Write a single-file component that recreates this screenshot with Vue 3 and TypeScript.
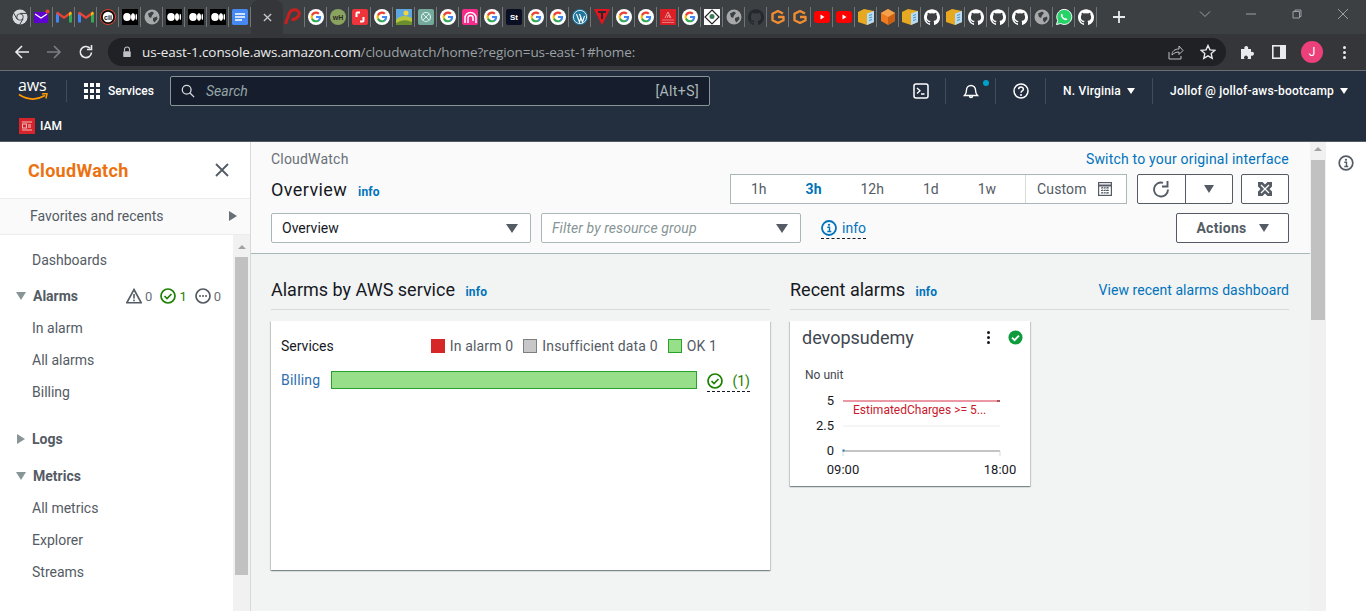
<script setup lang="ts">
type Fav = 'chrome' | 'mail' | 'gmail' | 'cii' | 'medium' | 'globe' | 'docs' | 'active' | 'pin' | 'g' | 'wh' | 'shop' | 'land' | 'gpt' | 'pink' | 'st' | 'wp' | 'tee' | 'redbox' | 'hex' | 'ghdark' | 'og' | 'yt' | 'box' | 'cube' | 'gh' | 'wa'

const tabs: Fav[] = [
  'chrome', 'mail', 'gmail', 'gmail', 'cii', 'medium', 'globe', 'medium', 'medium', 'medium', 'docs', 'active',
  'pin', 'g', 'wh', 'shop', 'g', 'land', 'gpt', 'g', 'pink', 'g', 'st', 'g', 'g', 'wp', 'tee', 'g', 'g', 'redbox', 'g', 'hex',
  'globe', 'ghdark', 'og', 'og', 'yt', 'yt', 'box', 'cube', 'box', 'gh', 'box', 'gh', 'gh', 'gh', 'globe', 'wa', 'gh'
]

const ghPath = 'M12 .5C5.37.5 0 5.87 0 12.5c0 5.3 3.44 9.8 8.2 11.39.6.11.82-.26.82-.58v-2.03c-3.34.73-4.04-1.61-4.04-1.61-.55-1.39-1.33-1.76-1.33-1.76-1.09-.74.08-.73.08-.73 1.2.08 1.84 1.24 1.84 1.24 1.07 1.83 2.81 1.3 3.49 1 .11-.78.42-1.3.76-1.6-2.67-.3-5.47-1.33-5.47-5.93 0-1.31.47-2.38 1.24-3.22-.13-.3-.54-1.52.12-3.18 0 0 1.01-.32 3.3 1.23a11.5 11.5 0 016 0c2.29-1.55 3.3-1.23 3.3-1.23.66 1.66.25 2.88.12 3.18.77.84 1.24 1.91 1.24 3.22 0 4.61-2.81 5.63-5.48 5.92.43.37.81 1.1.81 2.22v3.29c0 .32.22.7.83.58A12 12 0 0024 12.5C24 5.87 18.63.5 12 .5z'

const ranges = [
  { label: '1h', active: false },
  { label: '3h', active: true },
  { label: '12h', active: false },
  { label: '1d', active: false },
  { label: '1w', active: false }
]

const alarmLinks = ['In alarm', 'All alarms', 'Billing']
const metricLinks = ['All metrics', 'Explorer', 'Streams']
</script>

<template>
  <div class="page">
    <!-- browser tab strip -->
    <div class="tabstrip">
      <div
        v-for="(tab, i) in tabs"
        :key="i"
        :class="tab === 'active' ? 'tab-active' : 'tab'"
      >
        <svg v-if="tab === 'active'" class="tab-close" viewBox="0 0 10 10"><path d="M1 1l8 8M9 1L1 9" stroke="#c4c7c9" stroke-width="1.500" /></svg>
        <svg v-else class="fav" viewBox="0 0 16 16">
          <template v-if="tab === 'chrome'">
            <circle cx="8" cy="8" r="7.5" fill="#dadce0" />
            <circle cx="8" cy="8" r="3.6" fill="#3c4043" />
            <circle cx="8" cy="8" r="2.7" fill="#dadce0" />
            <path d="M8 4.4h7M5 10l-3.4-6M11 10l-3.6 6" stroke="#3c4043" stroke-width="1" />
          </template>
          <template v-else-if="tab === 'mail'">
            <rect y="3" width="14" height="11" fill="#5f01d1" />
            <path d="M1 5l6 4 6-4" stroke="#fff" stroke-width="1.2" fill="none" />
            <circle cx="13.5" cy="2.5" r="2" fill="#ea4335" />
          </template>
          <template v-else-if="tab === 'gmail'">
            <path d="M0 13.5V4l2-1 1 1v9.5z" fill="#4285f4" />
            <path d="M13 13.5V4l1-1 2 1v9.5z" fill="#34a853" />
            <path d="M0 4.5l1.5-2L8 7.2l6.500-4.700 1.500 2L8 10z" fill="#ea4335" />
            <path d="M13 4l1.500-1.500L16 4.500 13 7z" fill="#fbbc04" />
          </template>
          <template v-else-if="tab === 'cii'">
            <circle cx="8" cy="8" r="7.500" fill="#111" stroke="#e8432e" stroke-width="1" />
            <circle cx="8" cy="8" r="5.200" fill="#fff" />
            <text x="8" y="10.500" class="fav-text" font-size="7" fill="#111">cii</text>
          </template>
          <template v-else-if="tab === 'medium'">
            <rect width="16" height="16" fill="#000" />
            <ellipse cx="5" cy="8" rx="3.800" ry="4" fill="#fff" />
            <ellipse cx="11" cy="8" rx="2" ry="3.700" fill="#fff" />
            <ellipse cx="14.300" cy="8" rx=".8" ry="3.300" fill="#fff" />
          </template>
          <template v-else-if="tab === 'globe'">
            <circle cx="8" cy="8" r="7.500" fill="#a6a8aa" />
            <path d="M4 4.500l4-2 2 1.500-2 2.500-1 2.500-2-1zM9 9l4-1.500.5 2.500-3 3.500-1.500-2z" fill="#3c4043" />
          </template>
          <template v-else-if="tab === 'docs'">
            <rect x="0" y="0" width="16" height="16" rx="1.500" fill="#4688f1" />
            <path d="M3 5h10M3 8h10M3 11h7" stroke="#fff" stroke-width="1.500" />
          </template>
          <template v-else-if="tab === 'pin'">
            <path d="M-.500 15L3.500 3.500Q6 0 10.500 1 14.500 3 12.500 7q-3 4-7 3.500" fill="none" stroke="#c9201f" stroke-width="3" />
          </template>
          <template v-else-if="tab === 'g'">
            <circle cx="8" cy="8" r="8" fill="#fff" />
            <g transform="translate(2.100 2.100) scale(.49)">
              <path d="M22.560 12.250c0-.78-.07-1.530-.2-2.250H12v4.260h5.920c-.26 1.370-1.040 2.530-2.210 3.310v2.770h3.570c2.080-1.920 3.280-4.740 3.280-8.090z" fill="#4285f4" />
              <path d="M12 23c2.970 0 5.460-.98 7.280-2.660l-3.570-2.770c-.98.66-2.230 1.060-3.710 1.060-2.860 0-5.290-1.930-6.160-4.530H2.180v2.840C3.990 20.530 7.700 23 12 23z" fill="#34a853" />
              <path d="M5.840 14.090c-.22-.66-.35-1.360-.35-2.090s.13-1.430.35-2.090V7.070H2.180C1.430 8.550 1 10.220 1 12s.43 3.450 1.180 4.930l3.660-2.840z" fill="#fbbc05" />
              <path d="M12 5.380c1.620 0 3.060.56 4.210 1.640l3.150-3.150C17.450 2.090 14.970 1 12 1 7.700 1 3.990 3.470 2.180 7.070l3.660 2.840c.87-2.600 3.300-4.530 6.160-4.530z" fill="#ea4335" />
            </g>
          </template>
          <template v-else-if="tab === 'wh'">
            <circle cx="8" cy="8" r="8" fill="#8aa35e" />
            <text x="8" y="10.500" class="fav-text" font-size="7" fill="#2a2a2a">wH</text>
          </template>
          <template v-else-if="tab === 'shop'">
            <rect width="16" height="16" rx="2" fill="#f0343c" />
            <path d="M8 3.500H5.500a1 1 0 0 0-1 1V8M8 12.500h2.500a1 1 0 0 0 1-1V8" stroke="#fff" stroke-width="2" fill="none" />
          </template>
          <template v-else-if="tab === 'land'">
            <rect width="16" height="16" fill="#5da7e0" />
            <circle cx="10" cy="4" r="2.500" fill="#f5d33f" />
            <path d="M0 11Q6 4 16 9v7H0z" fill="#b6c73f" />
            <path d="M0 14Q8 9 16 13v3H0z" fill="#6b8f2d" />
          </template>
          <template v-else-if="tab === 'gpt'">
            <rect width="16" height="16" rx="2" fill="#74aa9c" />
            <circle cx="8" cy="8" r="4.500" fill="none" stroke="#d8efe8" stroke-width="1.200" />
            <path d="M5 5l6 6M11 5l-6 6" stroke="#d8efe8" stroke-width="1" />
          </template>
          <template v-else-if="tab === 'pink'">
            <rect width="16" height="16" rx="2" fill="#f72b8c" />
            <path d="M3 14V9a5.500 5.500 0 0 1 11 0v5M6 14V9a2.500 2.500 0 0 1 5 0v3" fill="none" stroke="#fff" stroke-width="1.500" />
          </template>
          <template v-else-if="tab === 'st'">
            <rect width="16" height="16" rx="2" fill="#0a0f24" />
            <text x="8" y="11" class="fav-text" font-size="8" fill="#fff">St</text>
          </template>
          <template v-else-if="tab === 'wp'">
            <circle cx="8" cy="8" r="8" fill="#21759b" />
            <circle cx="8" cy="8" r="6.600" fill="none" stroke="#fff" stroke-width=".8" />
            <path d="M4.500 5l3 8 1.500-4.500L7.500 5M7.500 5l3 8 2-6" fill="none" stroke="#fff" stroke-width="1.100" />
          </template>
          <template v-else-if="tab === 'tee'">
            <path d="M0 0h16L8 16z" fill="#e3131f" />
            <path d="M4 3h8M8 3v7" stroke="#26282b" stroke-width="2" />
          </template>
          <template v-else-if="tab === 'redbox'">
            <rect width="16" height="16" fill="#da1f26" />
            <path d="M5 9l3-6 3 6M7 9l1.500-3 1.500 3" fill="none" stroke="#f4b6b6" stroke-width=".8" />
            <path d="M2 11h12M2 13.500h12" stroke="#f4b6b6" stroke-width=".6" />
          </template>
          <template v-else-if="tab === 'hex'">
            <rect width="16" height="16" fill="#fff" />
            <path d="M8 1l7 7-7 7-7-7z" fill="none" stroke="#222" stroke-width="1.200" />
            <circle cx="8" cy="7.500" r="2.500" fill="#3d7a55" />
          </template>
          <template v-else-if="tab === 'ghdark'">
            <g transform="scale(.667)"><path :d="ghPath" fill="#24292e" /></g>
          </template>
          <template v-else-if="tab === 'gh'">
            <g transform="scale(.667)"><path :d="ghPath" fill="#fff" /></g>
          </template>
          <template v-else-if="tab === 'og'">
            <path d="M13 4.500L8 2 2.500 4.800v6.400L8 14l5.500-2.800V8H8" fill="none" stroke="#f08d34" stroke-width="2.400" stroke-linejoin="round" />
          </template>
          <template v-else-if="tab === 'yt'">
            <rect y="2" width="16" height="12" rx="3" fill="#f00" />
            <path d="M6.500 5.500l4 2.500-4 2.500z" fill="#fff" />
          </template>
          <template v-else-if="tab === 'box'">
            <path d="M0 3l6-3 10 2v11l-7 3-9-3z" fill="#e8a922" />
            <path d="M9 4.500l7-2.500v11l-7 3z" fill="#b7dcf5" />
            <path d="M11 6.500l3-1M11 9l3-1M11 11.500l3-1" stroke="#4a90c2" stroke-width="1" />
          </template>
          <template v-else-if="tab === 'cube'">
            <path d="M8 0l7 4v8l-7 4-7-4V4z" fill="#ee7b1f" />
            <path d="M8 8l7-4v8l-7 4z" fill="#c95f14" />
            <path d="M8 8L1 4l7-4 7 4z" fill="#f5a04a" />
          </template>
          <template v-else-if="tab === 'wa'">
            <path d="M.5 15.500l1.200-4A7.500 7.500 0 1 1 4.700 14.500z" fill="#25d366" stroke="#fff" stroke-width="1" />
            <path d="M5.500 4.500c-1.500 1.500-.5 3.500 1 5s3.500 2.500 5 1l-1.500-1.500-1 .5c-1-.5-2-1.500-2.500-2.500l.5-1z" fill="#fff" />
          </template>
        </svg>
      </div>
      <svg class="tab-plus" viewBox="0 0 12 12"><path d="M6 0v12M0 6h12" stroke="#e8eaed" stroke-width="1.800" /></svg>
      <div class="win-controls">
        <svg viewBox="0 0 12 12" class="win"><path d="M1 3.500l5 5 5-5" /></svg>
        <svg viewBox="0 0 12 12" class="win"><path d="M1 6h10" /></svg>
        <svg viewBox="0 0 12 12" class="win"><path d="M2 3.500h6.500V10H2zM4 3.500V2h6v6.500H8.500" /></svg>
        <svg viewBox="0 0 12 12" class="win"><path d="M1 1l10 10M11 1L1 11" /></svg>
      </div>
    </div>

    <!-- browser toolbar -->
    <div class="toolbar">
      <svg class="tool-btn" viewBox="0 0 16 16"><path d="M15 8H2M8 2L2 8l6 6" fill="none" stroke="#e8eaed" stroke-width="1.600" /></svg>
      <svg class="tool-btn" viewBox="0 0 16 16"><path d="M1 8h13M8 2l6 6-6 6" fill="none" stroke="#7b7e82" stroke-width="1.600" /></svg>
      <svg class="tool-btn" viewBox="0 0 16 16"><path d="M13.500 8.500A5.600 5.600 0 1 1 12 4.200M13.500 1v4.500H9" fill="none" stroke="#e8eaed" stroke-width="1.600" /></svg>
      <div class="urlbar">
        <svg class="lock" viewBox="0 0 12 14"><path d="M3 6V4a3 3 0 0 1 6 0v2" fill="none" stroke="#bdc1c6" stroke-width="1.300" /><rect x="1.500" y="6" width="9" height="7" rx="1" fill="#bdc1c6" /></svg>
        <span class="url"><span class="url-host">us-east-1.console.aws.amazon.com</span>/cloudwatch/home?region=us-east-1#home:</span>
        <svg class="url-share" viewBox="0 0 16 16"><path d="M1 8v7h12v-3M4 11c0-4 3-6 7-6V2l4 4.500-4 4V8c-3 0-5 1-7 3z" fill="none" stroke="#bdc1c6" stroke-width="1" /></svg>
        <svg class="url-star" viewBox="0 0 16 16"><path d="M8 1.500l2 4.400 4.800.5-3.600 3.200 1 4.700L8 11.900l-4.200 2.400 1-4.700L1.200 6.400 6 5.900z" fill="none" stroke="#e8eaed" stroke-width="1.400" /></svg>
      </div>
      <svg class="ext" viewBox="0 0 16 16"><path d="M1 5h3.500a2 2 0 1 1 3.500 0h3v3a2 2 0 1 1 0 3.500V15H7.500a2 2 0 1 0-3 0H1z" fill="#e8eaed" /></svg>
      <svg class="side-panel" viewBox="0 0 14 14"><rect x=".8" y=".8" width="12.400" height="12.400" fill="none" stroke="#e8eaed" stroke-width="1.600" /><rect x="8" y="1" width="5" height="12" fill="#e8eaed" /></svg>
      <span class="avatar">J</span>
      <span class="kebab"><i></i><i></i><i></i></span>
    </div>

    <!-- aws console nav -->
    <header class="aws-nav">
      <div class="nav-row">
        <div class="aws-logo">
          <span class="aws-word">aws</span>
          <svg viewBox="0 0 32 9" class="aws-smile"><path d="M1 1.500Q14 10 27 2.500" fill="none" stroke="#f90" stroke-width="1.700" /><path d="M24 1l5-.5-1 5" fill="none" stroke="#f90" stroke-width="1.500" /></svg>
        </div>
        <span class="nav-sep"></span>
        <svg class="nav-grid" viewBox="0 0 16 16" fill="#fff">
          <rect width="4" height="4" /><rect x="6" width="4" height="4" /><rect x="12" width="4" height="4" />
          <rect y="6" width="4" height="4" /><rect x="6" y="6" width="4" height="4" /><rect x="12" y="6" width="4" height="4" />
          <rect y="12" width="4" height="4" /><rect x="6" y="12" width="4" height="4" /><rect x="12" y="12" width="4" height="4" />
        </svg>
        <span class="services">Services</span>
        <div class="search">
          <svg viewBox="0 0 16 16" class="search-icon"><circle cx="6.500" cy="6.500" r="5" fill="none" stroke="#d5dbdb" stroke-width="1.500" /><path d="M10 10l5 5" stroke="#d5dbdb" stroke-width="1.500" /></svg>
          <span class="search-text">Search</span>
          <span class="search-key">[Alt+S]</span>
        </div>
        <div class="nav-right">
          <span class="nav-item nav-ico">
            <svg viewBox="0 0 16 16" class="nav-icon"><rect x="1" y="1" width="14" height="14" rx="2" fill="none" stroke="#fff" stroke-width="1.500" /><path d="M4 5l3 2.700L4 10.500M8 11h3.500" fill="none" stroke="#fff" stroke-width="1.300" /></svg>
          </span>
          <span class="nav-item nav-ico bell">
            <svg viewBox="0 0 16 16" class="nav-icon"><path d="M1.500 12.500c1.500-1.500 2-2 2-5.500a4.500 4.500 0 0 1 9 0c0 3.500.5 4 2 5.500zM6.500 13c0 2 3 2 3 0" fill="none" stroke="#fff" stroke-width="1.400" /></svg>
            <span class="bell-dot"></span>
          </span>
          <span class="nav-item nav-ico">
            <svg viewBox="0 0 16 16" class="nav-icon"><circle cx="8" cy="8" r="7" fill="none" stroke="#fff" stroke-width="1.500" /><path d="M5.600 6.200c0-3 4.800-3 4.800 0 0 1.800-2.400 1.600-2.400 3.500" fill="none" stroke="#fff" stroke-width="1.500" /><circle cx="8" cy="12" r="1" fill="#fff" /></svg>
          </span>
          <span class="nav-item nav-text">N. Virginia <i class="caret"></i></span>
          <span class="nav-item nav-text nav-last">Jollof @ jollof-aws-bootcamp <i class="caret"></i></span>
        </div>
      </div>
      <div class="nav-row2">
        <svg viewBox="0 0 16 16" class="iam-icon"><rect width="16" height="16" fill="#d6242d" /><path d="M3 4h10M3 12h10" stroke="#f4bcbc" stroke-width="1" /><rect x="3.500" y="6" width="4" height="4" fill="none" stroke="#f4bcbc" stroke-width="1" /><rect x="9" y="6" width="3" height="4" fill="#e9777c" /></svg>
        <span>IAM</span>
      </div>
    </header>

    <div class="console">
      <!-- left navigation -->
      <aside class="sidebar">
        <div class="side-head">
          <span class="side-title">CloudWatch</span>
          <svg viewBox="0 0 14 14" class="side-close"><path d="M1 1l12 12M13 1L1 13" stroke="#545b64" stroke-width="1.800" /></svg>
        </div>
        <div class="favorites">
          <span>Favorites and recents</span>
          <i class="tri-right"></i>
        </div>
        <div class="side-body">
          <nav class="side-nav">
            <a class="side-link first">Dashboards</a>
            <div class="side-group">
              <i class="tri-down"></i><b>Alarms</b>
              <span class="alarm-counts">
                <svg viewBox="0 0 16 16" class="ci"><path d="M8 1.500L15.200 14.800H.8z" fill="none" stroke="#545b64" stroke-width="1.600" /><path d="M8 6v4.500M8 11.500v1.800" stroke="#545b64" stroke-width="1.600" /></svg>
                <em>0</em>
                <svg viewBox="0 0 16 16" class="ci"><circle cx="8" cy="8" r="7" fill="none" stroke="#1d8102" stroke-width="1.700" /><path d="M4.500 8l2.500 2.500 4.500-4.500" fill="none" stroke="#1d8102" stroke-width="1.700" /></svg>
                <em class="ok">1</em>
                <svg viewBox="0 0 16 16" class="ci"><circle cx="8" cy="8" r="7" fill="none" stroke="#545b64" stroke-width="1.700" /><circle cx="5" cy="8" r="1" fill="#545b64" /><circle cx="8" cy="8" r="1" fill="#545b64" /><circle cx="11" cy="8" r="1" fill="#545b64" /></svg>
                <em>0</em>
              </span>
            </div>
            <a v-for="item in alarmLinks" :key="item" class="side-link">{{ item }}</a>
            <div class="side-group logs"><i class="tri-side"></i><b>Logs</b></div>
            <div class="side-group metrics"><i class="tri-down"></i><b>Metrics</b></div>
            <a v-for="item in metricLinks" :key="item" class="side-link">{{ item }}</a>
          </nav>
          <div class="scrollbar side-scroll">
            <i class="sb-up"></i>
            <div class="sb-thumb side-thumb"></div>
          </div>
        </div>
      </aside>

      <!-- main content -->
      <main class="main">
        <section class="main-head">
          <div class="crumb-row">
            <span class="crumb">CloudWatch</span>
            <a class="link">Switch to your original interface</a>
          </div>
          <div class="title-row">
            <h1>Overview <a class="info">info</a></h1>
            <div class="time-range">
              <div class="range-list">
                <span v-for="r in ranges" :key="r.label" class="range" :class="{ on: r.active }">{{ r.label }}</span>
              </div>
              <span class="range-custom">
                Custom
                <svg viewBox="0 0 14 14" class="cal"><rect x=".6" y=".6" width="12.800" height="12.800" fill="none" stroke="#545b64" stroke-width="1.200" /><path d="M1 3.500h12" stroke="#545b64" stroke-width="2" /><path d="M3 6h8M3 8.500h8M3 11h8M4.300 5v7M7 5v7M9.700 5v7" stroke="#545b64" stroke-width="1.200" stroke-dasharray="1.500 1" /></svg>
              </span>
            </div>
            <div class="btn-pair">
              <button class="btn-seg">
                <svg viewBox="0 0 18 18" class="refresh"><path d="M16 9.500A7 7 0 1 1 11 2.800" fill="none" stroke="#545b64" stroke-width="1.900" /><path d="M15.500 1v5.500H10" fill="none" stroke="#545b64" stroke-width="1.900" /></svg>
              </button>
              <button class="btn-seg"><i class="tri-sm"></i></button>
            </div>
            <button class="btn-full">
              <svg viewBox="0 0 16 16" class="expand"><rect x="1" y="1" width="14" height="14" fill="#545b64" /><path d="M4 4l8 8M12 4l-8 8" stroke="#fff" stroke-width="1.300" /><path d="M5.500 1h5L8 3.500zM5.500 15h5L8 12.500zM1 5.500v5L3.500 8zM15 5.500v5L12.500 8z" fill="#fff" /></svg>
            </button>
          </div>
          <div class="filter-row">
            <div class="select"><span>Overview</span><i class="tri-btn"></i></div>
            <div class="select ghost"><span>Filter by resource group</span><i class="tri-btn"></i></div>
            <div class="info-help">
              <svg viewBox="0 0 16 16" class="info-icon"><circle cx="8" cy="8" r="7" fill="none" stroke="#0073bb" stroke-width="1.800" /><circle cx="8" cy="4.800" r="1.100" fill="#0073bb" /><path d="M6.300 7.300H8.500V11.500M6.300 11.500h4" fill="none" stroke="#0073bb" stroke-width="1.400" /></svg>
              <span>info</span>
            </div>
            <button class="actions">Actions <i class="tri-sm"></i></button>
          </div>
        </section>

        <section class="main-body">
          <div class="col">
            <div class="col-head">
              <h2>Alarms by AWS service <a class="info">info</a></h2>
            </div>
            <div class="card services-card">
              <div class="services-head">
                <span>Services</span>
                <div class="legend">
                  <i class="sw sw-red"></i><span class="lg-in">In alarm 0</span>
                  <i class="sw sw-grey"></i><span class="lg-ins">Insufficient data 0</span>
                  <i class="sw sw-green"></i><span>OK 1</span>
                </div>
              </div>
              <div class="service-row">
                <a class="svc-link">Billing</a>
                <div class="svc-bar"></div>
                <div class="svc-count">
                  <svg viewBox="0 0 16 16" class="ci"><circle cx="8" cy="8" r="7" fill="none" stroke="#1d8102" stroke-width="1.700" /><path d="M4.500 8l2.500 2.500 4.500-4.500" fill="none" stroke="#1d8102" stroke-width="1.700" /></svg>
                  <span>(1)</span>
                </div>
              </div>
            </div>
          </div>
          <div class="col">
            <div class="col-head">
              <h2>Recent alarms <a class="info">info</a></h2>
              <a class="link view-link">View recent alarms dashboard</a>
            </div>
            <div class="card alarm-card">
              <div class="alarm-top">
                <span class="alarm-name">devopsudemy</span>
                <span class="alarm-dots"><i></i><i></i><i></i></span>
                <svg viewBox="0 0 16 16" class="alarm-ok"><circle cx="8" cy="8" r="7.500" fill="#0e9b3c" /><path d="M4.300 8.200l2.700 2.600 4.700-4.800" fill="none" stroke="#fff" stroke-width="2" /></svg>
              </div>
              <div class="alarm-unit">No unit</div>
              <svg class="chart" viewBox="0 0 240 107" width="240" height="107">
                <path d="M53 23h157" stroke="#d6344a" stroke-width="1" />
                <path d="M207 23h3" stroke="#6e1208" stroke-width="1" />
                <path d="M53 48h157" stroke="#eaeded" stroke-width="1" />
                <path d="M53 73h157" stroke="#c4c4c4" stroke-width="2" />
                <path d="M53 73v5M210 73v5" stroke="#d5dbdb" stroke-width="1" />
                <rect x="52.500" y="71.500" width="2" height="2" fill="#1f77b4" />
                <text x="44" y="27" text-anchor="end" class="tick">5</text>
                <text x="44" y="52" text-anchor="end" class="tick">2.5</text>
                <text x="44" y="77" text-anchor="end" class="tick">0</text>
                <text x="53" y="96" text-anchor="middle" class="tick">09:00</text>
                <text x="210" y="96" text-anchor="middle" class="tick">18:00</text>
                <text x="63" y="36" class="thresh">EstimatedCharges &gt;= 5...</text>
              </svg>
            </div>
          </div>
        </section>
      </main>

      <div class="scrollbar main-scroll">
        <i class="sb-up"></i>
        <div class="sb-thumb main-thumb"></div>
      </div>

      <aside class="help-rail">
        <svg viewBox="0 0 16 16" class="rail-icon"><circle cx="8" cy="8" r="6.800" fill="none" stroke="#545b64" stroke-width="1.700" /><circle cx="8" cy="4.800" r="1.100" fill="#545b64" /><path d="M6.300 7.300H8.500V11.500M6.300 11.500h4" fill="none" stroke="#545b64" stroke-width="1.400" /></svg>
      </aside>
    </div>
  </div>
</template>

<style>
html, body {
  margin: 0;
  overflow: hidden;
}
</style>

<style scoped>
.page {
  width: 1366px;
  height: 611px;
  display: flex;
  flex-direction: column;
  overflow: hidden;
  font-family: Roboto, "Liberation Sans", sans-serif;
  font-size: 14px;
  color: #16191f;
}

/* browser chrome */
.tabstrip {
  height: 34px;
  flex: none;
  background: #3c4043;
  display: flex;
  align-items: flex-start;
  padding-left: 9px;
}
.tab {
  width: 22px;
  height: 34px;
  box-sizing: border-box;
  flex: none;
  display: flex;
  align-items: center;
  justify-content: center;
  position: relative;
}
.tab::after {
  content: "";
  position: absolute;
  right: 0;
  top: 7px;
  height: 20px;
  width: 1px;
  background: #70757a;
}
.tab-active {
  width: 32px;
  height: 34px;
  flex: none;
  background: #35363a;
  border-radius: 8px 8px 0 0;
  display: flex;
  align-items: center;
  justify-content: center;
}
.tab-close {
  width: 9px;
  height: 9px;
}
.fav {
  width: 16px;
  height: 16px;
  display: block;
  overflow: visible;
}
.fav-text {
  font-family: "Liberation Sans", sans-serif;
  font-weight: 700;
  text-anchor: middle;
}
.tab-plus {
  margin: 11px 0 0 16px;
  width: 12px;
  height: 12px;
}
.win-controls {
  margin-left: auto;
  width: 184px;
  display: grid;
  grid-template-columns: repeat(4, 46px);
  justify-items: center;
  align-items: center;
  height: 28px;
}
.win {
  width: 12px;
  height: 12px;
  fill: none;
  stroke: #9aa0a6;
  stroke-width: 1;
}

.toolbar {
  height: 36px;
  flex: none;
  background: #35363a;
  display: flex;
  align-items: center;
  padding-left: 14px;
  box-sizing: border-box;
}
.tool-btn {
  width: 16px;
  height: 16px;
  margin-right: 16px;
}
.urlbar {
  margin-left: -2px;
  width: 1118px;
  height: 28px;
  background: #202124;
  border-radius: 14px;
  display: flex;
  align-items: center;
  box-sizing: border-box;
  padding-left: 14px;
}
.lock {
  width: 10px;
  height: 12px;
  margin-right: 10px;
}
.url {
  color: #9aa0a6;
  font-family: "Open Sans", sans-serif;
  font-size: 13.5px;
  flex: 1;
  white-space: nowrap;
  letter-spacing: -0.1px;
}
.url-host {
  color: #e8eaed;
}
.url-share {
  width: 16px;
  height: 16px;
  margin-right: 16px;
}
.url-star {
  width: 16px;
  height: 16px;
  margin-right: 10px;
}
.ext {
  width: 16px;
  height: 16px;
  margin-left: 14px;
}
.side-panel {
  width: 14px;
  height: 14px;
  margin-left: 16px;
}
.avatar {
  width: 22px;
  height: 22px;
  margin-left: 15px;
  border-radius: 50%;
  background: #ec407a;
  color: #fff;
  font-size: 12px;
  display: flex;
  align-items: center;
  justify-content: center;
}
.kebab {
  margin-left: 20px;
  display: flex;
  flex-direction: column;
  gap: 2px;
}
.kebab i {
  width: 3px;
  height: 3px;
  border-radius: 50%;
  background: #e8eaed;
}

/* aws nav */
.aws-nav {
  height: 72px;
  flex: none;
  box-sizing: border-box;
  background: #232f3e;
  border-top: 1px solid #6b6f73;
  border-bottom: 1px solid #545b64;
  color: #fff;
}
.nav-row {
  height: 40px;
  display: flex;
  align-items: center;
  padding-left: 18px;
  box-sizing: border-box;
}
.aws-logo {
  width: 32px;
  height: 24px;
  position: relative;
}
.aws-word {
  display: block;
  font-family: "Open Sans", sans-serif;
  font-size: 16px;
  line-height: 16px;
  letter-spacing: -0.2px;
  margin-top: -2px;
}
.aws-smile {
  display: block;
  width: 32px;
  height: 9px;
  margin-top: 0;
}
.nav-sep {
  width: 1px;
  height: 22px;
  background: #414d5c;
  margin-left: 16px;
}
.nav-grid {
  width: 16px;
  height: 16px;
  margin-left: 17px;
}
.services {
  margin-left: 8px;
  font-size: 12px;
  font-weight: 500;
  width: 46px;
}
.search {
  margin-left: 16px;
  width: 540px;
  height: 30px;
  box-sizing: border-box;
  border: 1px solid #879596;
  border-radius: 2px;
  background: #161e2d;
  display: flex;
  align-items: center;
  padding: 0 10px 0 10px;
}
.search-icon {
  width: 14px;
  height: 14px;
}
.search-text {
  margin-left: 11px;
  font-style: italic;
  color: #95a5a6;
  font-size: 14px;
}
.search-key {
  margin-left: auto;
  color: #aab7b8;
  font-size: 14px;
  letter-spacing: 0.4px;
}
.nav-right {
  margin-left: auto;
  display: flex;
  align-items: center;
  height: 26px;
}
.nav-item {
  height: 26px;
  display: flex;
  align-items: center;
  padding: 0 17px 0 17px;
  border-left: 1px solid #414d5c;
  position: relative;
  box-sizing: border-box;
}
.nav-item:first-child {
  border-left: none;
}
.nav-ico {
  padding: 0 16px 0 17px;
}
.nav-item.nav-ico:first-child {
  padding: 0 16px 0 18px;
}
.nav-icon {
  width: 16px;
  height: 16px;
}
.bell-dot {
  position: absolute;
  top: 2px;
  right: 6px;
  width: 6px;
  height: 6px;
  border-radius: 50%;
  background: #00a1c9;
}
.nav-text {
  font-size: 12px;
  font-weight: 500;
  gap: 6px;
  letter-spacing: 0.2px;
}
.nav-last {
  padding-right: 18px;
}
.caret {
  width: 0;
  height: 0;
  border-left: 4.5px solid transparent;
  border-right: 4.5px solid transparent;
  border-top: 6px solid #fff;
}
.nav-row2 {
  height: 30px;
  display: flex;
  align-items: center;
  gap: 5px;
  padding-left: 19px;
  font-size: 12px;
  font-weight: 500;
}
.iam-icon {
  width: 16px;
  height: 16px;
}

/* console layout */
.console {
  flex: 1;
  display: flex;
  min-height: 0;
}
.sidebar {
  width: 251px;
  flex: none;
  box-sizing: border-box;
  background: #fff;
  border-right: 1px solid #d5dbdb;
  display: flex;
  flex-direction: column;
}
.side-head {
  height: 56px;
  flex: none;
  display: flex;
  align-items: center;
  justify-content: space-between;
  padding: 0 21px 0 28px;
}
.side-title {
  color: #ec7211;
  font-size: 18px;
  font-weight: 700;
  letter-spacing: 0.3px;
}
.side-close {
  width: 14px;
  height: 14px;
}
.favorites {
  height: 37px;
  flex: none;
  box-sizing: border-box;
  background: #fafafa;
  border-top: 1px solid #eaeded;
  border-bottom: 1px solid #eaeded;
  display: flex;
  align-items: center;
  justify-content: space-between;
  padding: 0 13px 2px 30px;
  color: #545b64;
}
.tri-right, .tri-side {
  width: 0;
  height: 0;
  border-top: 5.5px solid transparent;
  border-bottom: 5.5px solid transparent;
  border-left: 8px solid #687078;
}
.tri-side {
  border-left-color: #879596;
}
.side-body {
  flex: 1;
  display: flex;
  min-height: 0;
}
.side-nav {
  flex: 1;
  padding-top: 9px;
  display: flex;
  flex-direction: column;
  color: #545b64;
}
.side-link {
  display: block;
  height: 32px;
  line-height: 32px;
  padding-left: 32px;
}
.side-group {
  height: 32px;
  margin-top: 4px;
  display: flex;
  align-items: center;
  padding-left: 16px;
  gap: 7px;
}
.side-group b {
  font-weight: 700;
  color: #545b64;
}
.logs {
  margin-top: 15px;
  padding-left: 17px;
  gap: 7px;
}
.metrics {
  margin-top: 5px;
}
.tri-down {
  width: 0;
  height: 0;
  border-left: 5.5px solid transparent;
  border-right: 5.5px solid transparent;
  border-top: 8px solid #879596;
}
.alarm-counts {
  margin-left: auto;
  margin-right: 12px;
  display: flex;
  align-items: center;
  gap: 3px;
}
.alarm-counts em {
  font-style: normal;
  color: #687078;
  margin-right: 5px;
  font-size: 13px;
}
.alarm-counts em:last-child {
  margin-right: 0;
}
.alarm-counts em.ok {
  color: #1d8102;
}
.ci {
  width: 16px;
  height: 16px;
  display: block;
}

.scrollbar {
  width: 15px;
  flex: none;
  background: #f1f1f1;
  position: relative;
  display: flex;
  flex-direction: column;
  align-items: center;
}
.side-scroll {
  width: 17px;
}
.sb-up {
  width: 0;
  height: 0;
  margin-top: 5px;
  border-left: 4px solid transparent;
  border-right: 4px solid transparent;
  border-bottom: 4px solid #a3a3a3;
}
.side-scroll .sb-up {
  margin-top: 10px;
}
.sb-thumb {
  width: 100%;
  background: #c1c1c1;
  box-sizing: border-box;
  border-left: 1px solid #f1f1f1;
  border-right: 1px solid #f1f1f1;
}
.side-thumb {
  margin-top: 8px;
  height: 318px;
  border-left-width: 2px;
  border-right-width: 2px;
}
.main-thumb {
  margin-top: 9px;
  height: 160px;
}
.main-scroll {
  width: 16px;
}

/* main */
.main {
  flex: 1;
  min-width: 0;
  background: #f2f3f3;
  display: flex;
  flex-direction: column;
}
.main-head {
  height: 112px;
  flex: none;
  box-sizing: border-box;
  background: #fafafa;
  border-bottom: 1px solid #aab7b8;
  padding: 8px 21px 0 20px;
}
.crumb-row {
  display: flex;
  justify-content: space-between;
  align-items: center;
  height: 17px;
}
.crumb {
  color: #687078;
  font-size: 14px;
  letter-spacing: 0.2px;
}
.link {
  color: #0073bb;
  font-size: 14px;
  letter-spacing: 0.2px;
}
.view-link {
  letter-spacing: 0.05px;
  margin-top: 2px;
}
.title-row {
  display: flex;
  align-items: center;
  height: 30px;
  margin-top: 7px;
}
h1 {
  margin: 0;
  font-size: 18px;
  font-weight: 400;
  color: #16191f;
  flex: 1;
  letter-spacing: 0.4px;
}
h2 {
  margin: 0;
  font-size: 18px;
  font-weight: 400;
  color: #16191f;
}
.info {
  color: #0073bb;
  font-size: 12px;
  font-weight: 700;
  margin-left: 6px;
  letter-spacing: 0.2px;
}
.time-range {
  width: 397px;
  height: 30px;
  box-sizing: border-box;
  border: 1px solid #aab7b8;
  display: flex;
  align-items: center;
  color: #545b64;
  background: #fff;
}
.range-list {
  flex: 1;
  display: flex;
  gap: 39px;
  padding-left: 20px;
}
.range.on {
  color: #0073bb;
  font-weight: 700;
}
.range-custom {
  flex: none;
  width: 101px;
  height: 100%;
  box-sizing: border-box;
  border-left: 1px solid #d5dbdb;
  display: flex;
  align-items: center;
  gap: 11px;
  padding-left: 11px;
  letter-spacing: 0.15px;
}
.cal {
  width: 14px;
  height: 14px;
}
.btn-pair {
  display: flex;
  width: 96px;
  height: 30px;
  margin-left: 10px;
  box-sizing: border-box;
  border: 1px solid #545b64;
  border-radius: 2px;
  background: #fff;
}
.btn-seg {
  flex: 1;
  background: transparent;
  border: none;
  padding: 0;
  display: flex;
  align-items: center;
  justify-content: center;
}
.btn-seg + .btn-seg {
  border-left: 1px solid #545b64;
}
.refresh {
  width: 18px;
  height: 18px;
}
.btn-full {
  width: 48px;
  height: 30px;
  margin-left: 8px;
  box-sizing: border-box;
  border: 1px solid #545b64;
  border-radius: 2px;
  background: #fff;
  display: flex;
  align-items: center;
  justify-content: center;
  padding: 0;
}
.expand {
  width: 16px;
  height: 16px;
}
.tri-btn {
  display: inline-block;
  width: 0;
  height: 0;
  border-left: 6px solid transparent;
  border-right: 6px solid transparent;
  border-top: 9px solid #545b64;
}
.tri-sm {
  display: inline-block;
  width: 0;
  height: 0;
  border-left: 5px solid transparent;
  border-right: 5px solid transparent;
  border-top: 8px solid #545b64;
}
.filter-row {
  display: flex;
  align-items: center;
  margin-top: 9px;
  gap: 10px;
}
.select {
  width: 260px;
  height: 30px;
  box-sizing: border-box;
  border: 1px solid #aab7b8;
  border-radius: 2px;
  background: #fff;
  display: flex;
  align-items: center;
  justify-content: space-between;
  padding: 0 12px 0 10px;
  color: #16191f;
}
.ghost {
  color: #879596;
  font-style: italic;
  letter-spacing: 0.1px;
}
.info-help {
  margin-left: 10px;
  display: flex;
  align-items: center;
  gap: 5px;
  color: #0073bb;
  height: 21px;
  border-bottom: 1px dashed #16191f;
}
.info-icon {
  width: 16px;
  height: 16px;
}
.actions {
  margin-left: auto;
  width: 113px;
  height: 30px;
  box-sizing: border-box;
  border: 1px solid #545b64;
  border-radius: 2px;
  background: #fff;
  color: #545b64;
  font: 700 14px Roboto, sans-serif;
  letter-spacing: 0.3px;
  display: flex;
  align-items: center;
  justify-content: center;
  gap: 12px;
  padding: 0;
}

.main-body {
  padding: 23px 21px 0 20px;
  display: grid;
  grid-template-columns: 499px 499px;
  column-gap: 20px;
  align-items: start;
}
.col-head {
  display: flex;
  align-items: center;
  justify-content: space-between;
  height: 33px;
  box-sizing: border-box;
  padding-bottom: 8px;
  border-bottom: 1px solid #d5dbdb;
  margin-bottom: 11px;
}
.card {
  background: #fff;
  box-shadow: 0 1px 1px 0 rgba(0, 28, 36, 0.3), 1px 1px 1px 0 rgba(0, 28, 36, 0.15), -1px 1px 1px 0 rgba(0, 28, 36, 0.15);
}
.services-card {
  height: 249px;
  box-sizing: border-box;
  padding: 16px 10px;
}
.services-head {
  display: flex;
  align-items: center;
  height: 18px;
}
.legend {
  margin-left: 97px;
  display: flex;
  align-items: center;
  gap: 5px;
  color: #545b64;
  letter-spacing: 0.15px;
}
.lg-in, .lg-ins {
  margin-right: 5px;
}
.sw {
  width: 14px;
  height: 14px;
  box-sizing: border-box;
  display: block;
}
.sw-red {
  background: #d62728;
}
.sw-grey {
  background: #c7c7c7;
  border: 1px solid #7f7f7f;
}
.sw-green {
  background: #98df8a;
  border: 1px solid #2ca02c;
}
.service-row {
  display: flex;
  align-items: center;
  margin-top: 16px;
  height: 18px;
}
.svc-link {
  color: #2e6fae;
  width: 50px;
  letter-spacing: 0.2px;
}
.svc-bar {
  width: 366px;
  height: 18px;
  box-sizing: border-box;
  background: #98df8a;
  border: 1px solid #2ca02c;
}
.svc-count {
  margin-left: 10px;
  width: 43px;
  height: 20px;
  display: flex;
  align-items: center;
  justify-content: space-between;
  border-bottom: 1px dashed #16191f;
  color: #1d8102;
  margin-top: 2px;
}
.alarm-card {
  width: 240px;
  height: 165px;
}
.alarm-top {
  display: flex;
  align-items: center;
  height: 32px;
  padding: 0 7px 0 12px;
}
.alarm-name {
  font-size: 18px;
  color: #414750;
  flex: 1;
}
.alarm-dots {
  display: flex;
  flex-direction: column;
  gap: 2px;
  margin-right: 18px;
}
.alarm-dots i {
  width: 3px;
  height: 3px;
  background: #16191f;
  border-radius: 50%;
}
.alarm-ok {
  width: 15px;
  height: 15px;
}
.alarm-unit {
  margin: 15px 0 0 15px;
  font-size: 12px;
  color: #414750;
  line-height: 14px;
}
.chart {
  display: block;
  margin-top: -4px;
}
.tick {
  font-size: 13px;
  fill: #16191f;
  font-family: Roboto, sans-serif;
}
.thresh {
  font-size: 12px;
  fill: #c9182b;
  font-family: Roboto, sans-serif;
}

.help-rail {
  width: 40px;
  flex: none;
  background: #fff;
  display: flex;
  justify-content: center;
  padding-top: 13px;
  box-sizing: border-box;
}
.rail-icon {
  width: 16px;
  height: 16px;
}
</style>
